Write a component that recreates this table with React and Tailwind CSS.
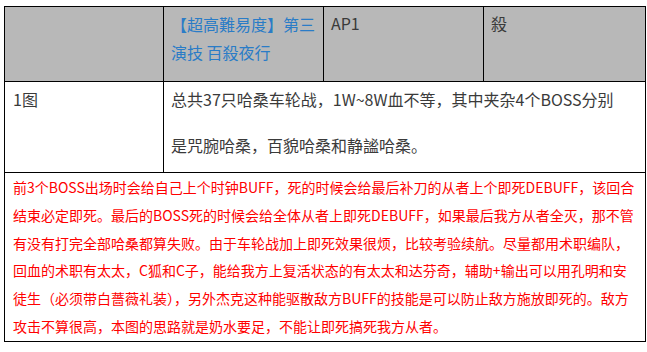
import React from 'react';

const font = { fontFamily: '"Noto Sans CJK SC", "Noto Sans", sans-serif' };

const notes = [
  '前3个BOSS出场时会给自己上个时钟BUFF，死的时候会给最后补刀的从者上个即死DEBUFF，该回合',
  '结束必定即死。最后的BOSS死的时候会给全体从者上即死DEBUFF，如果最后我方从者全灭，那不管',
  '有没有打完全部哈桑都算失败。由于车轮战加上即死效果很烦，比较考验续航。尽量都用术职编队，',
  '回血的术职有太太，C狐和C子，能给我方上复活状态的有太太和达芬奇，辅助+输出可以用孔明和安',
  '徒生（必须带白薔薇礼装），另外杰克这种能驱散敌方BUFF的技能是可以防止敌方施放即死的。敌方',
  '攻击不算很高，本图的思路就是奶水要足，不能让即死搞死我方从者。',
];

const App = () => {
  return (
    <div className="w-[647px] h-[352px] bg-white pl-[4px] pt-[6px]" style={font}>
      <table className="table-fixed border-collapse w-[641px] text-[16px] text-[#3a3a3a]">
        <colgroup>
          <col className="w-[159px]" />
          <col className="w-[160px]" />
          <col className="w-[160px]" />
          <col className="w-[162px]" />
        </colgroup>
        <tbody>
          {/* header row */}
          <tr className="bg-[#b8b8b8] align-top">
            <td className="border border-black h-[75px]"></td>
            <td className="border border-black px-[7px] pt-[3px] pb-[15px] leading-[28px] text-[#2a7cc7]">
              【超高難易度】第三<br />演技 百殺夜行
            </td>
            <td className="border border-black px-[7px] pt-[2px] leading-[28px]">AP1</td>
            <td className="border border-black px-[7px] pt-[2px] leading-[28px]">殺</td>
          </tr>

          {/* stage row */}
          <tr className="align-top">
            <td className="border border-black px-[8px] pt-[3px] leading-[28px]">1图</td>
            <td colSpan={3} className="border border-black px-[7px] pt-[3px] pb-[13px] leading-[28px] whitespace-nowrap">
              <p className="mb-[18px]">总共37只哈桑车轮战，1W~8W血不等，其中夹杂4个BOSS分别</p>
              <p>是咒腕哈桑，百貌哈桑和静謐哈桑。</p>
            </td>
          </tr>

          {/* notes */}
          <tr>
            <td colSpan={4} className="border border-black px-[8px] pt-[1px] pb-0 text-[14px] leading-[27.8px] text-[#ff0000] whitespace-nowrap">
              {notes.map((line, i) => (
                <div key={i}>{line}</div>
              ))}
            </td>
          </tr>
        </tbody>
      </table>
    </div>
  );
};

export default App;
